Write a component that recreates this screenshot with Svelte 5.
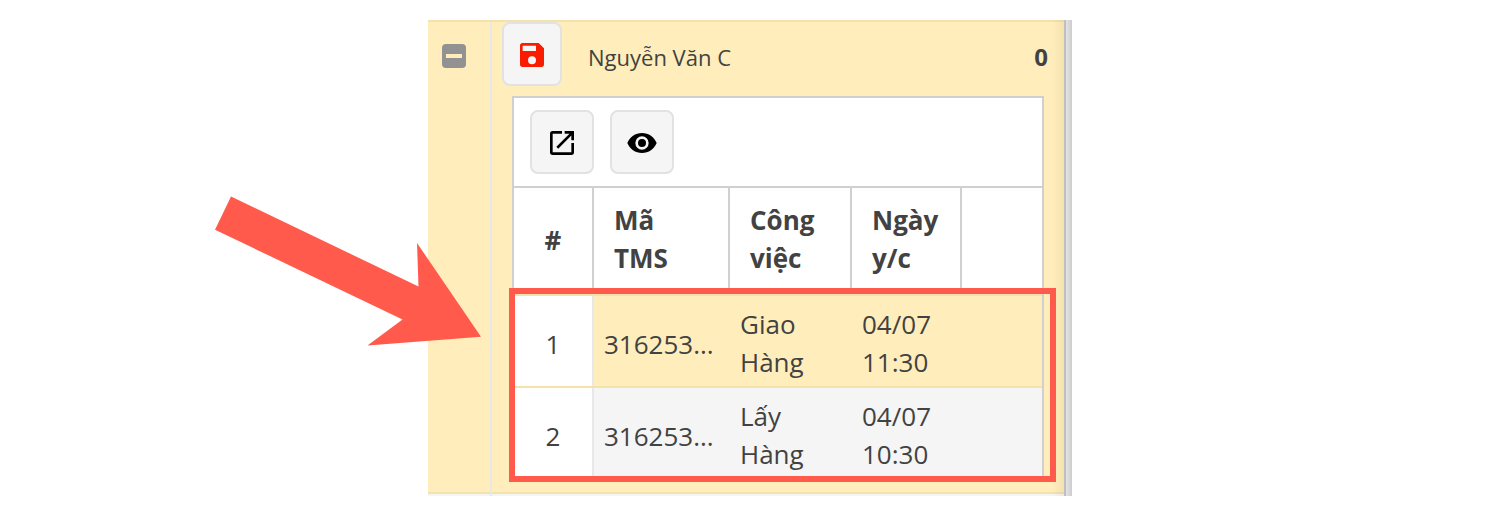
<script>
  const columns = [['#'], ['Mã', 'TMS'], ['Công', 'việc'], ['Ngày', 'y/c'], []];
  const rows = [
    { no: 1, code: '316253...', job: ['Giao', 'Hàng'], date: ['04/07', '11:30'], active: true },
    { no: 2, code: '316253...', job: ['Lấy', 'Hàng'], date: ['04/07', '10:30'], active: false }
  ];
</script>

<main class="page">
  <section class="panel">
    <aside class="toggle-col">
      <button class="toggle" aria-label="Thu gọn"><span></span></button>
    </aside>
    <div class="content">
      <header class="master">
        <button class="btn save" aria-label="Lưu">
          <svg viewBox="0 0 24 24"><path d="M15 9H5V5h10M12 19a3 3 0 1 1 0-6 3 3 0 0 1 0 6M17 3H5a2 2 0 0 0-2 2v14a2 2 0 0 0 2 2h14a2 2 0 0 0 2-2V7z" /></svg>
        </button>
        <span class="name">Nguyễn Văn C</span>
        <strong class="count">0</strong>
      </header>
      <div class="detail">
        <div class="toolbar">
          <button class="btn" aria-label="Mở">
            <svg viewBox="0 0 24 24"><path d="M14 3v2h3.59l-9.83 9.83 1.41 1.41L19 6.41V10h2V3m-2 16H5V5h7V3H5a2 2 0 0 0-2 2v14a2 2 0 0 0 2 2h14a2 2 0 0 0 2-2v-7h-2z" /></svg>
          </button>
          <button class="btn" aria-label="Xem">
            <svg viewBox="0 0 24 24"><path d="M12 9a3 3 0 1 0 0 6 3 3 0 0 0 0-6m0 8a5 5 0 1 1 0-10 5 5 0 0 1 0 10m0-12.500C7 4.500 2.730 7.610 1 12c1.730 4.390 6 7.500 11 7.500s9.270-3.110 11-7.500c-1.730-4.390-6-7.500-11-7.500z" /></svg>
          </button>
        </div>
        <div class="grid head">
          {#each columns as lines}
            <div class="cell"><div>{#each lines as line}<div>{line}</div>{/each}</div></div>
          {/each}
        </div>
        {#each rows as row}
          <div class="grid row" class:active={row.active}>
            <div class="cell no">{row.no}</div>
            <div class="cell code">{row.code}</div>
            <div class="cell"><div>{#each row.job as line}<div>{line}</div>{/each}</div></div>
            <div class="cell"><div>{#each row.date as line}<div>{line}</div>{/each}</div></div>
            <div class="cell"></div>
          </div>
        {/each}
      </div>
    </div>
    <div class="edge"></div>
  </section>
  <svg class="overlay" viewBox="0 0 1502 522">
    <path d="M231 196.500 418.500 286.500 417 243 481 336.800 367.500 345.500 402.500 319.500 215 229.700z" fill="#ff5a4c" />
    <rect x="512" y="291" width="541" height="188" fill="none" stroke="#ff5a4c" stroke-width="6" />
  </svg>
</main>

<style>
  :global(body) { background: #fff; }
  .page {
    position: relative;
    box-sizing: border-box;
    width: 1502px;
    height: 522px;
    padding: 20px 0 0 428px;
    overflow: hidden;
    font: 26px/38px "Open Sans", sans-serif;
    color: #424242;
  }
  .page * { box-sizing: border-box; }
  .panel { display: flex; width: 644px; height: 476px; }
  .toggle-col, .content {
    border-top: 2px solid #f4e2ad;
    background: linear-gradient(#f4e2ad, #f4e2ad) 0 470px / 100% 2px no-repeat,
      linear-gradient(#f5f5f5, #f5f5f5) 0 472px / 100% 2px no-repeat, #ffeebb;
  }
  .toggle-col { width: 62px; padding: 22px 0 0 14px; }
  .content {
    display: flex;
    flex-direction: column;
    width: 574px;
    position: relative;
  }
  .content::before {
    content: "";
    position: absolute;
    left: 0;
    top: 0;
    bottom: 0;
    width: 2px;
    background: #e8e8e8;
  }
  .content::after {
    content: "";
    position: absolute;
    right: 0;
    top: -2px;
    bottom: 0;
    width: 12px;
    background: linear-gradient(90deg, transparent, rgba(80, 50, 0, 0.065));
  }
  .toggle {
    display: flex;
    align-items: center;
    justify-content: center;
    width: 24px;
    height: 24px;
    padding: 0;
    border: 0;
    border-radius: 4px;
    background: #929292;
  }
  .toggle span { width: 16px; height: 4px; background: #ffeebb; }
  .master { display: flex; height: 74px; padding-left: 12px; }
  .btn {
    display: flex;
    align-items: center;
    justify-content: center;
    width: 64px;
    height: 64px;
    padding: 1px 0 0;
    border: 2px solid #e2e2e2;
    border-radius: 8px;
    background: #f5f5f5;
  }
  .btn svg { width: 32px; height: 32px; flex: none; fill: #000; }
  .save { width: 60px; }
  .save svg { fill: #f91c00; }
  .name { margin: 16px 0 0 26px; font-size: 22px; }
  .count { margin: 16px 16px 0 auto; font-size: 24px; }
  .detail {
    width: 532px;
    height: 384px;
    margin-left: 22px;
    border: 2px solid #d0d0d0;
    border-bottom: 0;
    background: #fff;
  }
  .toolbar {
    display: flex;
    gap: 16px;
    height: 90px;
    padding: 12px 16px;
    border-bottom: 2px solid #d0d0d0;
  }
  .grid { display: grid; grid-template-columns: 78px 136px 122px 110px 82px; }
  .cell { display: flex; align-items: center; white-space: nowrap; }
  .head { height: 106px; font-weight: 700; }
  .head .cell { padding: 0 0 4px 20px; border-left: 2px solid #d0d0d0; }
  .head .cell:first-child { padding: 0 0 2px; justify-content: center; border: 0; }
  .row { height: 92px; padding-top: 2px; background: #f5f5f5; }
  .row.active { position: relative; background: #ffeebb; box-shadow: inset 0 2px #f4e2ad, 0 2px #f4e2ad; }
  .row .cell { padding: 4px 0 0 12px; }
  .row .code { padding: 6px 0 0 10px; border-left: 2px solid #e8e8e8; }
  .row .no { padding: 6px 0 0; justify-content: center; background: #fff; }
  .edge {
    width: 8px;
    border-left: 2px solid #bdbfc1;
    background: linear-gradient(90deg, #e4e2e4, #cdcdcd);
  }
  .overlay { position: absolute; left: 0; top: 0; width: 1502px; height: 522px; pointer-events: none; }
</style>
